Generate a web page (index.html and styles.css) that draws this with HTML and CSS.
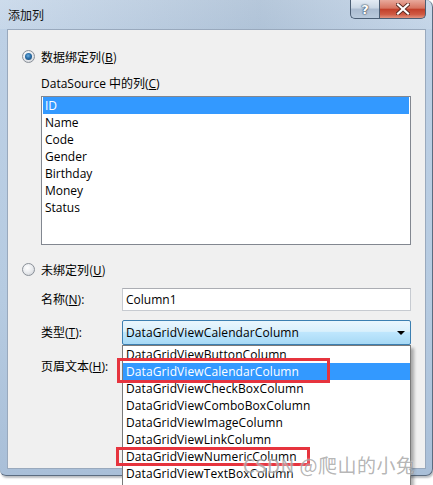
FILE: index.html
```html
<!DOCTYPE html>
<html lang="zh-CN">
<head>
<meta charset="utf-8">
<title>添加列</title>
<link rel="stylesheet" href="styles.css">
</head>
<body>
<div class="window">
  <div class="titlebar">
    <span class="title">添加列</span>
    <div class="caption-btns">
      <div class="cap-btn help"><span>?</span></div>
      <div class="cap-btn close">
        <svg width="14" height="12" viewBox="0 0 14 12">
          <path d="M2 1.5 L12 10.5 M12 1.5 L2 10.5" stroke="#5a2a22" stroke-width="4" stroke-linecap="square" fill="none"/>
          <path d="M2 1.5 L12 10.5 M12 1.5 L2 10.5" stroke="#ffffff" stroke-width="2.2" stroke-linecap="square" fill="none"/>
        </svg>
      </div>
    </div>
  </div>
  <div class="client">
    <div class="radio-row first">
      <span class="radio checked"></span>
      <span class="radio-text">数据绑定列(<u>B</u>)</span>
    </div>
    <div class="indent label-line">DataSource 中的列(<u>C</u>)</div>
    <div class="indent listbox">
      <div class="item selected">ID</div>
      <div class="item">Name</div>
      <div class="item">Code</div>
      <div class="item">Gender</div>
      <div class="item">Birthday</div>
      <div class="item">Money</div>
      <div class="item">Status</div>
    </div>
    <div class="radio-row second">
      <span class="radio"></span>
      <span class="radio-text">未绑定列(<u>U</u>)</span>
    </div>
    <div class="indent field-row name-row">
      <span class="field-label">名称(<u>N</u>):</span>
      <div class="textbox">Column1</div>
    </div>
    <div class="indent field-row type-row">
      <span class="field-label">类型(<u>T</u>):</span>
      <div class="combo">
        <span class="combo-text">DataGridViewCalendarColumn</span>
        <span class="combo-arrow"></span>
        <div class="dropdown">
          <div class="ditem">DataGridViewButtonColumn</div>
          <div class="ditem selected">DataGridViewCalendarColumn</div>
          <div class="ditem">DataGridViewCheckBoxColumn</div>
          <div class="ditem">DataGridViewComboBoxColumn</div>
          <div class="ditem">DataGridViewImageColumn</div>
          <div class="ditem">DataGridViewLinkColumn</div>
          <div class="ditem">DataGridViewNumericColumn</div>
          <div class="ditem">DataGridViewTextBoxColumn</div>
        </div>
      </div>
    </div>
    <div class="indent field-row header-row">
      <span class="field-label">页眉文本(<u>H</u>):</span>
    </div>
  </div>
</div>
<div class="mark mark-calendar"></div>
<div class="mark mark-numeric"></div>
<div class="watermark">CSDN @爬山的小兔</div>
</body>
</html>
```

FILE: styles.css
```css
html, body {
  margin: 0;
  padding: 0;
}
body {
  width: 433px;
  height: 485px;
  overflow: hidden;
  background: #ffffff;
  font-family: "Open Sans", "Noto Sans CJK SC", sans-serif;
  font-size: 12px;
  color: #000;
  position: relative;
}
u {
  text-decoration: underline;
  text-underline-offset: 1px;
}

.window {
  width: 432px;
  height: 475px;
  background: linear-gradient(to bottom, #c4d5e8 0px, #bdd0e5 30px, #b6cbe1 300px, #a9bfd8 475px);
  border-right: 1px solid #5b6c80;
  border-bottom: 1px solid #5b6c80;
  border-radius: 0 7px 7px 6px;
  box-shadow: 1px 2px 2px rgba(60, 70, 80, 0.35);
  display: flex;
  flex-direction: column;
}

.titlebar {
  height: 29px;
  display: flex;
  align-items: flex-start;
  justify-content: space-between;
  background: linear-gradient(to right, rgba(255,255,255,0.15), rgba(80,100,120,0.12) 60%, rgba(255,255,255,0.1));
  border-radius: 0 7px 0 0;
}
.title {
  font-family: "Noto Sans CJK SC", sans-serif;
  font-size: 12px;
  line-height: 29px;
  padding-left: 8px;
  color: #111;
}
.caption-btns {
  display: flex;
  margin-right: 6px;
}
.cap-btn {
  height: 19px;
  display: flex;
  align-items: center;
  justify-content: center;
  box-sizing: border-box;
  border: 1px solid #4b5e74;
  border-top: none;
}
.help {
  width: 29px;
  border-radius: 0 0 0 5px;
  border-right: none;
  background: linear-gradient(to bottom, #e3ebf4 0%, #c9d6e4 45%, #aabbd0 50%, #b9cadc 100%);
}
.help span {
  font-family: "DejaVu Sans", sans-serif;
  font-weight: bold;
  font-size: 13px;
  color: #ffffff;
  text-shadow: 0 0 1px #3d4c5e, 0 0 1px #3d4c5e, 0 0 2px #3d4c5e;
  line-height: 19px;
}
.close {
  width: 47px;
  border-radius: 0 0 5px 0;
  background: linear-gradient(to bottom, #e8a99c 0%, #d77461 45%, #c2402b 52%, #cf5a43 80%, #e19380 100%);
}

.client {
  margin-left: 7px;
  width: 419px;
  height: 440px;
  box-sizing: border-box;
  background: #f0f0f0;
  border: 1px solid #99a9bd;
  display: flex;
  flex-direction: column;
}

.radio-row {
  display: flex;
  align-items: center;
  height: 17px;
  padding-left: 14px;
  gap: 6px;
  font-family: "Noto Sans CJK SC", sans-serif;
}
.radio-row.first { margin-top: 18px; }
.radio-row.second { margin-top: 16px; }
.radio {
  width: 11px;
  height: 11px;
  border-radius: 50%;
  border: 1px solid #8a9098;
  background: radial-gradient(circle at 40% 35%, #ffffff 0%, #e9ebee 50%, #c8ccd2 100%);
  flex: none;
  position: relative;
}
.radio.checked::after {
  content: "";
  position: absolute;
  left: 2px;
  top: 2px;
  width: 7px;
  height: 7px;
  border-radius: 50%;
  background: radial-gradient(circle at 45% 40%, #6fb0e0 0%, #2a6ea8 45%, #173f66 100%);
}
.radio-text {
  line-height: 17px;
}

.indent {
  margin-left: 33px;
}
.label-line {
  margin-top: 10px;
  line-height: 17px;
  height: 17px;
}
.listbox {
  margin-top: 4px;
  width: 370px;
  height: 149px;
  box-sizing: border-box;
  background: #ffffff;
  border: 1px solid #828790;
  padding: 0 1px;
}
.item {
  height: 17px;
  line-height: 17px;
  padding-left: 2px;
}
.item.selected {
  background: #3399ff;
  color: #ffffff;
}

.field-row {
  display: flex;
  align-items: center;
}
.field-label {
  font-family: "Open Sans", "Noto Sans CJK SC", sans-serif;
  width: 81px;
  flex: none;
  line-height: 17px;
}
.name-row { margin-top: 10px; height: 23px; }
.type-row { margin-top: 9px; height: 25px; }
.header-row { margin-top: 13px; height: 17px; }

.textbox {
  width: 289px;
  height: 23px;
  box-sizing: border-box;
  background: #ffffff;
  border: 1px solid #c7cbd1;
  border-top-color: #abadb3;
  padding-left: 3px;
  line-height: 21px;
}
.combo {
  width: 289px;
  height: 25px;
  box-sizing: border-box;
  border: 1px solid #3c7fb1;
  border-radius: 2px;
  background: linear-gradient(to bottom, #eaf6fd 0%, #d9f0fc 45%, #bee6fd 50%, #a7d9f5 100%);
  display: flex;
  align-items: center;
  justify-content: space-between;
  padding: 0 5px 0 3px;
  position: relative;
}
.combo-text {
  line-height: 23px;
  letter-spacing: 0.1px;
}
.combo-arrow {
  width: 0;
  height: 0;
  border-left: 4px solid transparent;
  border-right: 4px solid transparent;
  border-top: 4px solid #000;
  margin-top: 1px;
}
.dropdown {
  position: absolute;
  left: -1px;
  top: 24px;
  width: 289px;
  height: 150px;
  box-sizing: border-box;
  background: #ffffff;
  border: 1px solid #7a7a7a;
  box-shadow: 3px 3px 3px rgba(0, 0, 0, 0.3);
  z-index: 2;
}
.ditem {
  height: 17px;
  line-height: 17px;
  padding-left: 3px;
  letter-spacing: 0.1px;
}
.ditem.selected {
  background: #3399ff;
  color: #ffffff;
}

.mark {
  position: absolute;
  box-sizing: border-box;
  border: 3px solid #e6343e;
  z-index: 3;
}
.mark-calendar {
  left: 117px;
  top: 358px;
  width: 213px;
  height: 25px;
}
.mark-numeric {
  left: 116px;
  top: 447px;
  width: 194px;
  height: 19px;
}
.watermark {
  position: absolute;
  left: 243px;
  top: 452px;
  font-family: "Noto Sans CJK SC", sans-serif;
  font-size: 19px;
  line-height: 26px;
  letter-spacing: 0.5px;
  color: rgba(140, 140, 140, 0.65);
  text-shadow: 0 0 2px rgba(255, 255, 255, 0.9);
  z-index: 4;
  white-space: nowrap;
}
```
